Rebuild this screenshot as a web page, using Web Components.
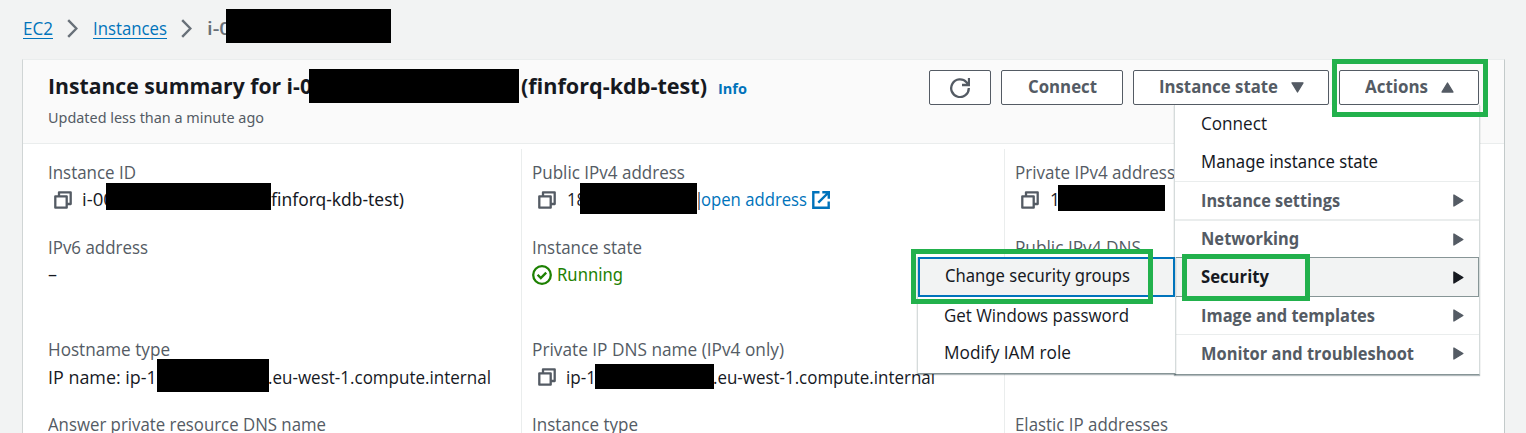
<!DOCTYPE html>
<html lang="en">
<head>
<meta charset="utf-8">
<title>EC2 instance summary</title>
<style>
html,body{margin:0;height:433px;overflow:hidden;background:#f2f3f3}
</style>
</head>
<body>
<instance-page></instance-page>
<script>
const define = (name, html, ready) => {
  const t = document.createElement('template');
  t.innerHTML = html;
  customElements.define(name, class extends HTMLElement {
    connectedCallback() {
      if (this.shadowRoot) return;
      this.attachShadow({mode: 'open'}).append(t.content.cloneNode(true));
      if (ready) ready(this, this.shadowRoot);
    }
  });
};

// A single line of text condensed or widened to the advance given in "w".
define('fit-text', `<style>
:host{display:inline-block;flex:none;white-space:nowrap;font-family:"Open Sans","Noto Sans",sans-serif}
:host([g]){font-family:"Noto Sans","Open Sans",sans-serif}
span{display:inline-block;transform-origin:0 50%}
</style><span><slot></slot></span>`, (h, r) => {
  const w = +h.getAttribute('w'), s = r.querySelector('span');
  const n = s.getBoundingClientRect().width;
  h.style.width = w + 'px';
  if (n) s.style.transform = `scaleX(${w / n})`;
});

const icons = {
  copy: [18, 18, '<path d="M5 5V1.3h11.7V13H13M1.3 5.3h11.4v11.4H1.3z" fill="none" stroke="currentColor" stroke-width="2.3" stroke-linejoin="round"/>'],
  external: [18, 18, '<path d="M7.5 1.3H1.3v15.4h15.4v-6.2M10.3 1.2h6.5v6.5M16.5 1.5 6.3 11.7" fill="none" stroke="currentColor" stroke-width="2.4"/>'],
  check: [20, 20, '<circle cx="10" cy="10" r="8.8" fill="none" stroke="currentColor" stroke-width="2.3"/><path d="m5.6 9.8 3.2 3.3 5.4-5.5" fill="none" stroke="currentColor" stroke-width="2.3"/>'],
  chevron: [11, 19, '<path d="m1.2 1.2 8.2 8.3-8.2 8.3" fill="none" stroke="currentColor" stroke-width="2.4"/>'],
  refresh: [20, 20, '<path d="M18.8 10A8.8 8.8 0 1 1 16.5 4.3L18.5 6.5M19 0v7h-7" fill="none" stroke="currentColor" stroke-width="2.3"/>'],
  down: [13, 11, '<path d="M1 .8h11L6.5 10z" fill="currentColor" stroke="currentColor" stroke-width="1.3" stroke-linejoin="round"/>'],
  up: [13, 11, '<path d="M1 10h11L6.5 1z" fill="currentColor" stroke="currentColor" stroke-width="1.3" stroke-linejoin="round"/>'],
  right: [11, 13, '<path d="M.9 1v11l9-5.5z" fill="currentColor" stroke="currentColor" stroke-width="1.3" stroke-linejoin="round"/>']
};
define('ui-icon', `<style>:host{display:block;flex:none}svg{display:block}</style><div></div>`, (h, r) => {
  const [w, ht, p] = icons[h.getAttribute('name')];
  r.querySelector('div').innerHTML = `<svg width="${w}" height="${ht}" viewBox="0 0 ${w} ${ht}">${p}</svg>`;
});

define('ui-button', `<style>
:host{display:flex;align-items:center;box-sizing:border-box;height:35px;border:1px solid #545b64;border-radius:2px;background:#fff;color:#545b64;font-weight:700;line-height:31px;padding-left:26px}
::slotted(fit-text){height:33px}
</style><slot></slot>`);

define('data-field', `<style>
:host{display:block;height:54px;line-height:29px}
.label{display:flex;align-items:center;box-sizing:border-box;padding-top:2px;color:#545b64;height:27px;line-height:19px}
.value{display:flex;box-sizing:border-box;height:27px;color:#16191f}
:host([low]) .value{padding-top:1px}
::slotted(ui-icon){color:#545b64;margin:6px 0 0 6px}
:host([low]) ::slotted(ui-icon){margin-top:5px}
</style><div class="label"><slot name="label"></slot></div><div class="value"><slot></slot></div>`);

define('data-column', `<style>
:host{display:flex;flex-direction:column;box-sizing:border-box;border-left:1px solid #eaeded;padding:9px 0 0 10px;height:300px}
:host([first]){border-left-color:transparent;padding-left:24px}
::slotted(:nth-child(2)){margin-top:21px}
::slotted(:nth-child(3)){margin-top:48px}
::slotted(:nth-child(4)){margin-top:21px}
</style><slot></slot>`);

define('menu-item', `<style>
:host{display:flex;align-items:center;justify-content:space-between;box-sizing:border-box;height:38px;padding:0 15px 0 26px;color:#16191f;border:0 solid #eaeded}
:host([group]){font-weight:700;color:#545b64}
:host([line]){border-top-width:1px}
:host([thick]){border-top-width:2px}
:host([current]){height:40px;background:#f2f3f3;border:1px solid #879596;color:#16191f;padding:0 14px 0 25px}
:host([focus]){height:40px;background:#f2f3f3;border:2px solid #0073bb;padding:0 0 2px 25px}
::slotted(fit-text){height:30px}
</style><slot></slot>`);

define('menu-panel', `<style>
:host{display:block;position:absolute;box-sizing:border-box;background:#fff;border:1px solid #d5dbdb;border-top:0;border-bottom:1px solid #879596;box-shadow:0 1px 1px rgba(0,28,36,.3);line-height:28px}
</style><slot></slot>`);

// Overlay drawn on top of the page: a filled block or an outlined frame.
define('mark-box', `<style>
:host{display:block;position:absolute;box-sizing:border-box;background:#000}
:host([frame]){background:none;border:5px solid #22b14c}
</style>`, h => {
  const [x, y, w, t] = h.getAttribute('box').split(',');
  Object.assign(h.style, {left: x + 'px', top: y + 'px', width: w + 'px', height: t + 'px'});
});

define('instance-page', `<style>
:host{display:block;position:relative;width:1526px;height:433px;overflow:hidden;background:#f2f3f3;font:400 17.5px/27px "Open Sans","Noto Sans",sans-serif;color:#16191f}
nav{display:flex;align-items:flex-start;height:59px;padding:14px 0 0 23px;box-sizing:border-box;color:#687078;line-height:28px}
nav a{color:#0073bb;height:24px;border-bottom:1px solid #0073bb}
nav ui-icon{margin:5px 15px 0 14px}
nav b{font-weight:600}
main{margin-left:22px;width:1483px;height:400px;box-sizing:border-box;border:1px solid #eaeded;border-left-color:#d0d5d5;border-right-color:#c3caca;background:#fff}
header{display:flex;justify-content:space-between;height:84px;box-sizing:border-box;border-bottom:1px solid #eaeded;background:#fafafa;padding:10px 25px 0 25px}
h1{display:flex;margin:0;height:34px;font:700 22px/30px "Open Sans","Noto Sans",sans-serif}
.info{font-size:15px;line-height:37px;color:#0073bb;margin-left:11px}
.sub{font-size:15px;line-height:27px;color:#545b64}
.actions{display:flex;gap:10px}
.grid{display:grid;grid-template-columns:498px 483px 1fr;padding-top:5px}
.link{color:#0073bb}
menu-panel.main{left:1174px;top:105px;width:306px;height:270px}
menu-panel.sub-menu{left:917px;top:257px;width:259px;height:117px}
</style>
<nav>
<a><fit-text w="30">EC2</fit-text></a><ui-icon name="chevron"></ui-icon><a><fit-text w="74">Instances</fit-text></a><ui-icon name="chevron" style="margin-left:14px"></ui-icon><b><fit-text w="24">i-0</fit-text></b>
</nav>
<main>
<header>
<div><h1><fit-text w="264">Instance summary for i-0</fit-text><fit-text w="186" style="margin-left:209px">(finforq-kdb-test)</fit-text><fit-text class="info" w="29">Info</fit-text></h1>
<div class="sub"><fit-text g w="216">Updated less than a minute ago</fit-text></div></div>
<div class="actions">
<ui-button style="width:62px;padding-left:20px"><ui-icon name="refresh"></ui-icon></ui-button>
<ui-button style="width:122px"><fit-text w="69">Connect</fit-text></ui-button>
<ui-button style="width:196px;padding-left:25px"><fit-text w="119">Instance state</fit-text><ui-icon name="down" style="margin-left:13px"></ui-icon></ui-button>
<ui-button style="width:140px;padding-left:25px"><fit-text w="63">Actions</fit-text><ui-icon name="up" style="margin-left:13px"></ui-icon></ui-button>
</div>
</header>
<div class="grid">
<data-column first>
<data-field><fit-text slot="label" w="88">Instance ID</fit-text><ui-icon name="copy"></ui-icon><fit-text w="32" style="margin-left:10px">i-00</fit-text><fit-text w="133" g style="margin-left:157px">finforq-kdb-test)</fit-text></data-field>
<data-field><fit-text slot="label" w="100">IPv6 address</fit-text><fit-text w="9">–</fit-text></data-field>
<data-field low><fit-text slot="label" w="122">Hostname type</fit-text><fit-text w="119">IP name: ip-17</fit-text><fit-text w="223" style="margin-left:101px">.eu-west-1.compute.internal</fit-text></data-field>
<data-field><fit-text slot="label" w="278">Answer private resource DNS name</fit-text></data-field>
</data-column>
<data-column>
<data-field><fit-text slot="label" w="153">Public IPv4 address</fit-text><ui-icon name="copy"></ui-icon><fit-text w="19" style="margin-left:11px">18</fit-text><fit-text w="8" style="margin-left:109px">|</fit-text><fit-text class="link" w="106" style="margin-left:-2px">open address</fit-text><ui-icon class="link" name="external" style="margin-left:5px;color:#0073bb"></ui-icon></data-field>
<data-field><fit-text slot="label" w="110">Instance state</fit-text><ui-icon name="check" style="margin:5px 5px 0 0;color:#1d8102"></ui-icon><fit-text g w="66" style="color:#1d8102">Running</fit-text></data-field>
<data-field low><fit-text slot="label" w="252">Private IP DNS name (IPv4 only)</fit-text><ui-icon name="copy"></ui-icon><fit-text w="30" style="margin-left:10px">ip-1</fit-text><fit-text w="222" style="margin-left:117px">.eu-west-1.compute.internal</fit-text></data-field>
<data-field><fit-text slot="label" w="106">Instance type</fit-text></data-field>
</data-column>
<data-column>
<data-field><fit-text slot="label" w="160">Private IPv4 address</fit-text><ui-icon name="copy"></ui-icon><fit-text w="10" style="margin-left:11px">1</fit-text></data-field>
<data-field><fit-text slot="label" w="126">Public IPv4 DNS</fit-text></data-field>
<data-field></data-field>
<data-field><fit-text slot="label" w="153">Elastic IP addresses</fit-text></data-field>
</data-column>
</div>
</main>
<menu-panel class="main">
<menu-item><fit-text w="66">Connect</fit-text></menu-item>
<menu-item><fit-text g w="177">Manage instance state</fit-text></menu-item>
<menu-item group line><fit-text w="139">Instance settings</fit-text><ui-icon name="right"></ui-icon></menu-item>
<menu-item group thick><fit-text g w="98">Networking</fit-text><ui-icon name="right"></ui-icon></menu-item>
<menu-item group current><fit-text w="68">Security</fit-text><ui-icon name="right"></ui-icon></menu-item>
<menu-item group style="height:37px"><fit-text w="174">Image and templates</fit-text><ui-icon name="right"></ui-icon></menu-item>
<menu-item group line><fit-text w="213">Monitor and troubleshoot</fit-text><ui-icon name="right"></ui-icon></menu-item>
</menu-panel>
<menu-panel class="sub-menu">
<menu-item focus><fit-text g w="185">Change security groups</fit-text></menu-item>
<menu-item style="height:37px"><fit-text w="185">Get Windows password</fit-text></menu-item>
<menu-item><fit-text w="127">Modify IAM role</fit-text></menu-item>
</menu-panel>
<mark-box box="226,9,165,34"></mark-box>
<mark-box box="309,69,210,34"></mark-box>
<mark-box box="106,183,165,27"></mark-box>
<mark-box box="580,183,117,31"></mark-box>
<mark-box box="1058,185,107,26"></mark-box>
<mark-box box="157,359,112,33"></mark-box>
<mark-box box="595,364,119,25"></mark-box>
<mark-box frame box="1332,59,156,58"></mark-box>
<mark-box frame box="1182,254,128,47"></mark-box>
<mark-box frame box="911,249,242,55"></mark-box>`);
</script>
</body>
</html>
